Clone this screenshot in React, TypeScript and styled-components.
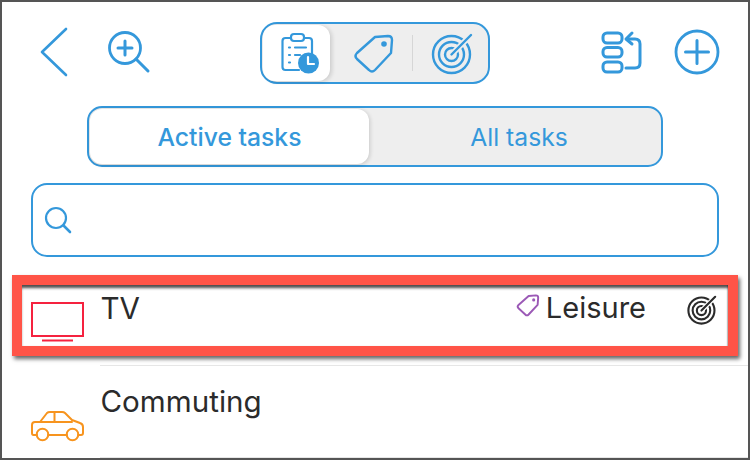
import React from "react";
import styled, { createGlobalStyle } from "styled-components";

const BLUE = "#3498db";

const Global = createGlobalStyle`
  html, body { margin: 0; padding: 0; background: #fff; }
  body { font-family: Inter, "Noto Sans", "Liberation Sans", sans-serif; }
`;

const Frame = styled.div`
  box-sizing: border-box;
  width: 750px;
  height: 460px;
  border: 2px solid #555;
  background: #fff;
  overflow: hidden;
  display: flex;
  flex-direction: column;
`;

const Header = styled.header`
  display: flex;
  align-items: flex-start;
  justify-content: space-between;
  height: 62px;
  margin-top: 20px;
  padding: 0 28px 0 38px;
`;

const IconGroup = styled.div<{ $width: number }>`
  width: ${(p) => p.$width}px;
  height: 62px;
  display: flex;
  align-items: flex-start;
  justify-content: space-between;
`;

const Icon = styled.svg<{ $mt?: number }>`
  display: block;
  flex: none;
  fill: none;
  stroke-linecap: round;
  stroke-linejoin: round;
  margin-top: ${(p) => p.$mt ?? 0}px;
`;

const ViewSwitch = styled.div`
  box-sizing: border-box;
  width: 230px;
  height: 62px;
  margin-right: 2px;
  border: 2px solid ${BLUE};
  border-radius: 17px;
  background: #eee;
  padding: 1px;
  display: flex;
  align-items: center;
`;

const ViewTile = styled.div`
  width: 67px;
  height: 56px;
  border-radius: 12px;
  background: #fff;
  box-shadow: 2px 1px 4px rgba(0, 0, 0, 0.14);
  display: flex;
  align-items: center;
  justify-content: center;
`;

const ViewItem = styled.div<{ $ml: number; $mt?: number }>`
  margin-left: ${(p) => p.$ml}px;
  margin-top: ${(p) => p.$mt ?? 0}px;
  display: flex;
`;

const ViewDivider = styled.div`
  width: 1px;
  height: 36px;
  margin-left: 15px;
  background: #d6d6d6;
`;

const TabsWrap = styled.div`
  margin: 22px 0 0 85px;
`;

const Tabs = styled.div`
  box-sizing: border-box;
  width: 576px;
  height: 61px;
  border: 2px solid ${BLUE};
  border-radius: 15px;
  background: #eee;
  padding: 1px;
  display: flex;
`;

const Tab = styled.div<{ $active?: boolean }>`
  box-sizing: border-box;
  width: ${(p) => (p.$active ? "279px" : "291px")};
  padding-left: ${(p) => (p.$active ? "0" : "9px")};
  border-radius: 12px;
  display: flex;
  align-items: center;
  justify-content: center;
  color: ${BLUE};
  font-size: 24.7px;
  font-weight: ${(p) => (p.$active ? 500 : 400)};
  background: ${(p) => (p.$active ? "#fff" : "transparent")};
  box-shadow: ${(p) => (p.$active ? "1px 1px 4px rgba(0,0,0,0.16)" : "none")};
`;

const Search = styled.div`
  box-sizing: border-box;
  width: 688px;
  height: 74px;
  margin: 16px 0 0 29px;
  border: 2px solid ${BLUE};
  border-radius: 16px;
  padding-left: 11px;
  display: flex;
  align-items: center;
`;

const HighlightRow = styled.div`
  box-sizing: border-box;
  height: 81px;
  margin: 18px 10px 0;
  border: 10px solid #ff5447;
  padding-left: 9px;
  display: flex;
  align-items: flex-start;
  box-shadow: 2px 3px 4px rgba(0, 0, 0, 0.6), inset 0 4px 3px -1px rgba(0, 0, 0, 0.7),
    inset -1px 0 1px rgba(0, 0, 0, 0.2);
`;

const RowIcon = styled.div<{ $top: number }>`
  width: 53px;
  margin-top: ${(p) => p.$top}px;
  flex: none;
`;

const Name = styled.div<{ $top: number }>`
  margin: ${(p) => p.$top}px 0 0 16.5px;
  color: #2b2b2b;
  font-size: 29.6px;
  line-height: 36px;
  flex: 1;
`;

const CategoryTag = styled.div`
  margin: 7px 0 0 0;
`;

const Category = styled.div`
  margin: 5px 0 0 5px;
  color: #2b2b2b;
  font-size: 29px;
  line-height: 36px;
`;

const GoalIcon = styled.div`
  margin: 9px 10px 0 41px;
`;

const Divider = styled.div`
  height: 1px;
  margin: 9px 0 0 98px;
  background: #e6e6e6;
`;

const PlainRow = styled.div`
  height: 91px;
  padding-left: 29px;
  display: flex;
  align-items: flex-start;
`;

const FootLine = styled(Divider)`
  margin-top: 0;
`;

const Target = ({ size, color, bg, weight }: { size: number; color: string; bg: string; weight: number }) => (
  <Icon width={size} height={size} viewBox="0 0 44 44">
    <g stroke={color} strokeWidth={weight}>
      <circle cx="20.5" cy="23.5" r="18.5" />
      <circle cx="20.5" cy="23.5" r="12.5" />
      <circle cx="20.5" cy="23.5" r="6.5" />
    </g>
    <path d="M20.5 23.5 L39 5" stroke={bg} strokeWidth={weight + 3.5} />
    <path d="M20.5 23.5 L40 4" stroke={color} strokeWidth={weight} />
  </Icon>
);

const Tag = ({ size, color, weight }: { size: number; color: string; weight: number }) => (
  <Icon width={size} height={size} viewBox="0 0 48 48">
    <path
      d="M26 7 L39 6 Q43 6 43 10 L42 23 L26 40 Q23 43 20 40 L8 29 Q5 26 8 23 Z"
      stroke={color}
      strokeWidth={weight}
    />
    <circle cx="35" cy="14" r="2.8" fill={color} />
  </Icon>
);

export default function App() {
  return (
    <>
      <Global />
      <Frame>
        <Header>
          <IconGroup $width={111}>
            <Icon width={28} height={50} viewBox="0 0 28 50" stroke={BLUE} strokeWidth={2.6} $mt={5}>
              <path d="M26 2 L2 25 L26 48" />
            </Icon>
            <Icon width={44} height={46} viewBox="0 0 44 46" stroke={BLUE} strokeWidth={2.8} $mt={8}>
              <circle cx="18" cy="18" r="15.5" />
              <path d="M29 29 L41 41" strokeWidth={3} />
              <path d="M11 18 H25 M18 11 V25" strokeWidth={3} />
            </Icon>
          </IconGroup>

          <ViewSwitch>
            <ViewTile>
              <Icon width={48} height={48} viewBox="0 0 48 48" stroke={BLUE} strokeWidth={2.2}>
                <path d="M17 9 H12.5 Q9.5 9 9.5 12 V38 Q9.5 41 12.5 41 H26 M39 26 V12 Q39 9 36 9 H31" />
                <rect x="18" y="5" width="13" height="7" rx="3" />
                <path d="M16 18.5 H17 M22 18.5 H33 M16 26 H17 M22 26 H27 M16 33.5 H17" />
                <circle cx="35.5" cy="34" r="10.5" fill={BLUE} stroke="none" />
                <path d="M35 28 V35 H41" stroke="#fff" strokeWidth={2.2} />
              </Icon>
            </ViewTile>
            <ViewItem $ml={19} $mt={1}>
              <Tag size={48} color={BLUE} weight={2.4} />
            </ViewItem>
            <ViewDivider />
            <ViewItem $ml={18}>
              <Target size={44} color={BLUE} bg="#eee" weight={2.4} />
            </ViewItem>
          </ViewSwitch>

          <IconGroup $width={119}>
            <Icon width={44} height={44} viewBox="0 0 44 44" stroke={BLUE} strokeWidth={3} $mt={8}>
              <rect x="2" y="3" width="19" height="10" rx="4" />
              <rect x="2" y="17.5" width="19" height="9.5" rx="4" />
              <rect x="2" y="32" width="19" height="10" rx="4" />
              <path d="M25 38 H34 Q39 38 39 33 V14 Q39 9 34 9 H27" />
              <path d="M31 3 L25 9 L31 14" />
            </Icon>
            <Icon width={46} height={46} viewBox="0 0 46 46" stroke={BLUE} strokeWidth={2.8} $mt={7}>
              <circle cx="23" cy="23" r="21" />
              <path d="M11.5 23 H34.5 M23 11.5 V34.5" strokeWidth={3} />
            </Icon>
          </IconGroup>
        </Header>

        <TabsWrap>
          <Tabs>
            <Tab $active>Active tasks</Tab>
            <Tab>All tasks</Tab>
          </Tabs>
        </TabsWrap>

        <Search>
          <Icon width={28} height={28} viewBox="0 0 28 28" stroke={BLUE} strokeWidth={2.2}>
            <circle cx="12" cy="12" r="10" />
            <path d="M19.5 19.5 L26 26" strokeWidth={2.6} />
          </Icon>
        </Search>

        <HighlightRow>
          <RowIcon $top={17}>
            <Icon width={53} height={40} viewBox="0 0 53 40" stroke="#f5223f" strokeWidth={2}>
              <path d="M1 1 H52 V34 H1 Z" strokeLinejoin="miter" />
              <path d="M11 38.500 H42" strokeLinecap="butt" />
            </Icon>
          </RowIcon>
          <Name $top={5}>TV</Name>
          <CategoryTag>
            <Tag size={27} color="#9b59b6" weight={3.4} />
          </CategoryTag>
          <Category>Leisure</Category>
          <GoalIcon>
            <Target size={31} color="#2b2b2b" bg="#fff" weight={3} />
          </GoalIcon>
        </HighlightRow>

        <Divider />

        <PlainRow>
          <RowIcon $top={45}>
            <Icon width={53} height={31} viewBox="0 0 53 31" stroke="#f7941e" strokeWidth={2}>
              <path d="M6 24 H2.500 Q1 24 1 22 V14 Q1 11 4 11 H9 L16 2 Q17 1 19 1 H31 Q33 1 34 2 L41 9 L49 12 Q52 13 52 16 V22 Q52 24 50 24 H47 M17 24 H36" />
              <path d="M9 11 H41 M23.500 1 V11" />
              <circle cx="11.500" cy="23.500" r="5.800" />
              <circle cx="41.500" cy="23.500" r="5.800" />
            </Icon>
          </RowIcon>
          <Name $top={17}>Commuting</Name>
        </PlainRow>

        <FootLine />
      </Frame>
    </>
  );
}
